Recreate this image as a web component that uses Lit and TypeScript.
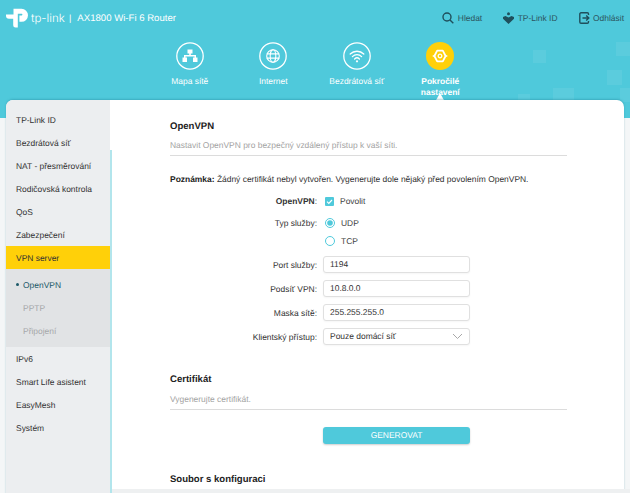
import { LitElement, html, css, svg } from "lit";
import { customElement } from "lit/decorators.js";

const ICONS: Record<string, any> = {
  map: svg`<path d="M-2.500-6.500h5v4H.800V-1H6v2.500h1.500v4.500h-4.500V1.500h1.500V.500H-4.500v1H-3v4.500h-4.500V1.500H-6V-1H-.800V-2.500H-2.500z" fill="#fff"/>`,
  globe: svg`<g fill="none" stroke="#fff" stroke-width="1.100"><circle r="6.300"/><ellipse rx="2.800" ry="6.300"/><path d="M-6.300-2.100H6.300M-6.300 2.100H6.300"/></g>`,
  wifi: svg`<g fill="none" stroke="#fff" stroke-width="1.300" stroke-linecap="round"><path d="M-6.800-2a9.800 9.800 0 0 1 13.600 0"/><path d="M-4.600.6a6.500 6.500 0 0 1 9.200 0"/><path d="M-2.400 3a3.400 3.400 0 0 1 4.800 0"/></g><circle cy="5.300" r="1.100" fill="#fff"/>`,
  gear: svg`<path d="M-2.800-5.300H2.800L5.600 0 2.800 5.300H-2.800L-5.600 0Z" fill="none" stroke="#fff" stroke-width="1.800" stroke-linejoin="round"/><circle r="1.800" fill="none" stroke="#fff" stroke-width="1.300"/><path d="M-7.300 0h1.700M5.600 0h1.700" stroke="#fff" stroke-width="1.600"/>`,
};

@customElement("app-root")
export class AppRoot extends LitElement {
  static styles = css`
    :host { display: block; width: 630px; height: 493px; overflow: hidden; position: relative; background: #f4f6f7; font-family: "Liberation Sans", Arial, sans-serif; font-size: 8.45px; color: #333; text-rendering: geometricPrecision; }
    .hdr { height: 118px; background: #4fc9db; position: relative; overflow: hidden; }
    .sq { position: absolute; background: rgba(255,255,255,.07); }
    .top { height: 36px; display: flex; align-items: center; }
    .logo { margin-left: 6px; width: 23px; height: 21px; flex: none; }
    .tp { margin-left: 2px; color: #fff; font: 300 11.500px "Inter", sans-serif; width: 35px; white-space: nowrap; }
    .bar { color: #fff; margin-left: 3px; font-size: 9px; }
    .model { color: #fff; font-size: 9.600px; margin-left: 6px; white-space: nowrap; }
    .links { margin-left: auto; display: flex; color: #2c5560; font-size: 8.450px; align-items: center; margin-right: 6px; }
    .link { display: flex; align-items: center; gap: 3.500px; margin-left: 21px; }
    .link svg { display: block; }
    .nav { display: flex; margin-left: 148px; width: 334px; padding-top: 6px; }
    .item { width: 83.500px; display: flex; flex-direction: column; align-items: center; color: #fff; font-size: 8.450px; line-height: 11px; text-align: center; position: relative; height: 60px; }
    .circ { width: 28px; height: 28px; margin-bottom: 6px; display: block; }
    .on { font-weight: 700; }
    .tri { position: absolute; left: 36.500px; top: 51px; width: 0; height: 0; border: 5px solid transparent; border-top: 0; border-bottom: 9px solid #fff; }
    .panel { position: absolute; left: 6px; top: 100px; width: 618px; height: 400px; background: #fff; border-radius: 7px 7px 0 0; display: flex; overflow: hidden; box-shadow: 0 -1px 2px rgba(30,120,140,.35); }
    .side { width: 104px; flex: none; background: #eceef0; padding-top: 8px; color: #333; position: relative; }
    .line { width: 2px; flex: none; background: linear-gradient(#fff 0, #fff 50px, #b2e5ec 50px); }
    .mi { height: 23px; line-height: 24px; padding-left: 10px; white-space: nowrap; }
    .act { background: #ffd009; }
    .sub { background: #e1e3e5; padding-top: 4px; height: 74px; }
    .si { height: 23px; line-height: 24px; padding-left: 17px; color: #a6a8aa; }
    .si.cur { color: #1c5968; position: relative; }
    .si.cur::before { content: ""; position: absolute; left: 10px; top: 10px; width: 3px; height: 3px; border-radius: 50%; background: #1c5968; }
    .main { flex: 1; padding: 21px 0 0 58px; }
    .h { font-size: 9.550px; font-weight: 700; color: #222; line-height: 12px; }
    .d { color: #a3a3a3; line-height: 12px; margin-top: 6px; padding-bottom: 4px; border-bottom: 1px solid #dcdcdc; width: 397px; height: 12px; }
    .note { margin-top: 16.500px; line-height: 12px; color: #333; white-space: nowrap; }
    .note b { color: #222; }
    .form { margin-top: 4.500px; width: 300px; }
    .row { display: flex; align-items: center; height: 24px; }
    .lab { width: 147px; text-align: right; margin-right: 6px; flex: none; white-space: nowrap; }
    .box { width: 147px; height: 17px; box-sizing: border-box; border: 1px solid #e0e0e0; border-radius: 3px; padding-left: 6px; line-height: 15px; display: flex; align-items: center; justify-content: space-between; color: #333; background: #fff; box-shadow: 0 1px 2px rgba(0,0,0,.04); }
    .opt { display: flex; align-items: center; gap: 6px; padding-left: 2px; color: #444; }
    .cb { width: 9px; height: 9px; display: block; }
    .rd { width: 10px; height: 10px; display: block; }
    .tall { height: 18px; }
    .first { margin-top: 1px; }
    .port { margin-top: 2.500px; }
    .cert { margin-top: 25px; }
    .certd { margin-top: 7px; }
    .btnrow { margin: 17.500px 0 0 153px; }
    .btn { width: 147px; height: 17px; border-radius: 3px; background: #4fc9db; box-shadow: 0 1px 2px rgba(0,0,0,.2); color: #fff; font-size: 8.450px; line-height: 17px; text-align: center; }
    .file { margin-top: 29.500px; }
    .chev { margin-right: 6px; }
    .foot { position: absolute; left: 112px; right: 0; top: 489px; height: 4px; background: #eef0f1; }
  `;

  private circle(icon: string, yellow = false) {
    return html`<svg class="circ" viewBox="-14 -14 28 28">
      ${yellow ? svg`<circle r="14" fill="#ffd009"/>` : svg`<circle r="13.200" fill="none" stroke="#fff" stroke-width="1.300"/>`}
      ${ICONS[icon]}
    </svg>`;
  }

  render() {
    const squares = [
      [533, 50, 13, 13], [616, 42, 14, 14], [607, 70, 15, 15], [553, 88, 21, 14], [518, 94, 12, 8], [620, 88, 10, 14],
    ];
    return html`
      <div class="hdr">
        ${squares.map(([x, y, w, h]) => html`<div class="sq" style="left:${x}px;top:${y}px;width:${w}px;height:${h}px"></div>`)}
        <div class="top">
          <svg class="logo" viewBox="0 0 23 21"><path fill="#fff" fill-rule="evenodd" d="M7.500 6.500V0.800H15.500A6.500 6.500 0 0 1 15.500 13.800H13.400V7.400H15.800A.9.9 0 0 0 15.800 5.700H11.800V19.500H9.500A2.300 2.300 0 0 1 7.200 17.200V10.800H3A3 3 0 0 1 0 7.800V6.500Z"/></svg>
          <span class="tp">tp-link</span><span class="bar">|</span><span class="model">AX1800 Wi-Fi 6 Router</span>
          <div class="links">
            <span class="link"><svg width="12" height="12" viewBox="0 0 12 12" fill="none" stroke="#1f4f5c" stroke-width="1.400"><circle cx="5" cy="5" r="4"/><path d="M8 8l3.300 3.300"/></svg>Hledat</span>
            <span class="link"><svg width="11" height="12" viewBox="0 0 11 12" fill="#1f4f5c"><circle cx="5.500" cy="1.800" r="1.500"/><path d="M0 5l2.500-1 3 1.600 3-1.600 2.500 1v1.800l-5.500 5.200-5.500-5.200z"/></svg>TP-Link ID</span>
            <span class="link"><svg width="11" height="12" viewBox="0 0 11 12" fill="none" stroke="#1f4f5c" stroke-width="1.400"><path d="M9.500 3V2a1.200 1.200 0 0 0-1.200-1.200H2A1.200 1.200 0 0 0 .8 2v8A1.200 1.200 0 0 0 2 11.200h6.300A1.200 1.200 0 0 0 9.500 10V9"/><path d="M3.500 6h6M7.200 3.500L9.800 6 7.200 8.500"/></svg>Odhlásit</span>
          </div>
        </div>
        <div class="nav">
          <div class="item">${this.circle("map")}Mapa sítě</div>
          <div class="item">${this.circle("globe")}Internet</div>
          <div class="item">${this.circle("wifi")}Bezdrátová síť</div>
          <div class="item on">${this.circle("gear", true)}Pokročilé<br />nastavení<span class="tri"></span></div>
        </div>
      </div>
      <div class="panel">
        <div class="side">
          ${["TP-Link ID", "Bezdrátová síť", "NAT - přesměrování", "Rodičovská kontrola", "QoS", "Zabezpečení"].map((t) => html`<div class="mi">${t}</div>`)}
          <div class="mi act">VPN server</div>
          <div class="sub">
            <div class="si cur">OpenVPN</div>
            <div class="si">PPTP</div>
            <div class="si">Připojení</div>
          </div>
          ${["IPv6", "Smart Life asistent", "EasyMesh", "Systém"].map((t) => html`<div class="mi">${t}</div>`)}
        </div>
        <div class="line"></div>
        <div class="main">
          <div class="h">OpenVPN</div>
          <div class="d">Nastavit OpenVPN pro bezpečný vzdálený přístup k vaší síti.</div>
          <div class="note"><b>Poznámka:</b> Žádný certifikát nebyl vytvořen. Vygenerujte dole nějaký před povolením OpenVPN.</div>
          <div class="form">
            <div class="row"><span class="lab"><b>OpenVPN</b>:</span>
              <span class="opt"><svg class="cb" viewBox="0 0 9 9"><rect width="9" height="9" rx="1" fill="#4fc9db"/><path d="M2 4.600l1.800 1.800L7 3" fill="none" stroke="#fff" stroke-width="1.200"/></svg>Povolit</span></div>
            <div class="row tall first"><span class="lab">Typ služby:</span>
              <span class="opt"><svg class="rd" viewBox="0 0 10 10"><circle cx="5" cy="5" r="4.500" fill="none" stroke="#4fc9db"/><circle cx="5" cy="5" r="2.800" fill="#4fc9db"/></svg>UDP</span></div>
            <div class="row tall"><span class="lab"></span>
              <span class="opt"><svg class="rd" viewBox="0 0 10 10"><circle cx="5" cy="5" r="4.500" fill="none" stroke="#4fc9db"/></svg>TCP</span></div>
            <div class="row port"><span class="lab">Port služby:</span><span class="box">1194</span></div>
            <div class="row"><span class="lab">Podsíť VPN:</span><span class="box">10.8.0.0</span></div>
            <div class="row"><span class="lab">Maska sítě:</span><span class="box">255.255.255.0</span></div>
            <div class="row"><span class="lab">Klientský přístup:</span><span class="box">Pouze domácí síť
              <svg class="chev" width="11" height="7" viewBox="0 0 11 7" fill="none" stroke="#a8a8a8"><path d="M1 1l4.500 4.500L10 1"/></svg></span></div>
          </div>
          <div class="h cert">Certifikát</div>
          <div class="d certd">Vygenerujte certifikát.</div>
          <div class="btnrow"><div class="btn">GENEROVAT</div></div>
          <div class="h file">Soubor s konfiguraci</div>
        </div>
      </div>
      <div class="foot"></div>
    `;
  }
}
